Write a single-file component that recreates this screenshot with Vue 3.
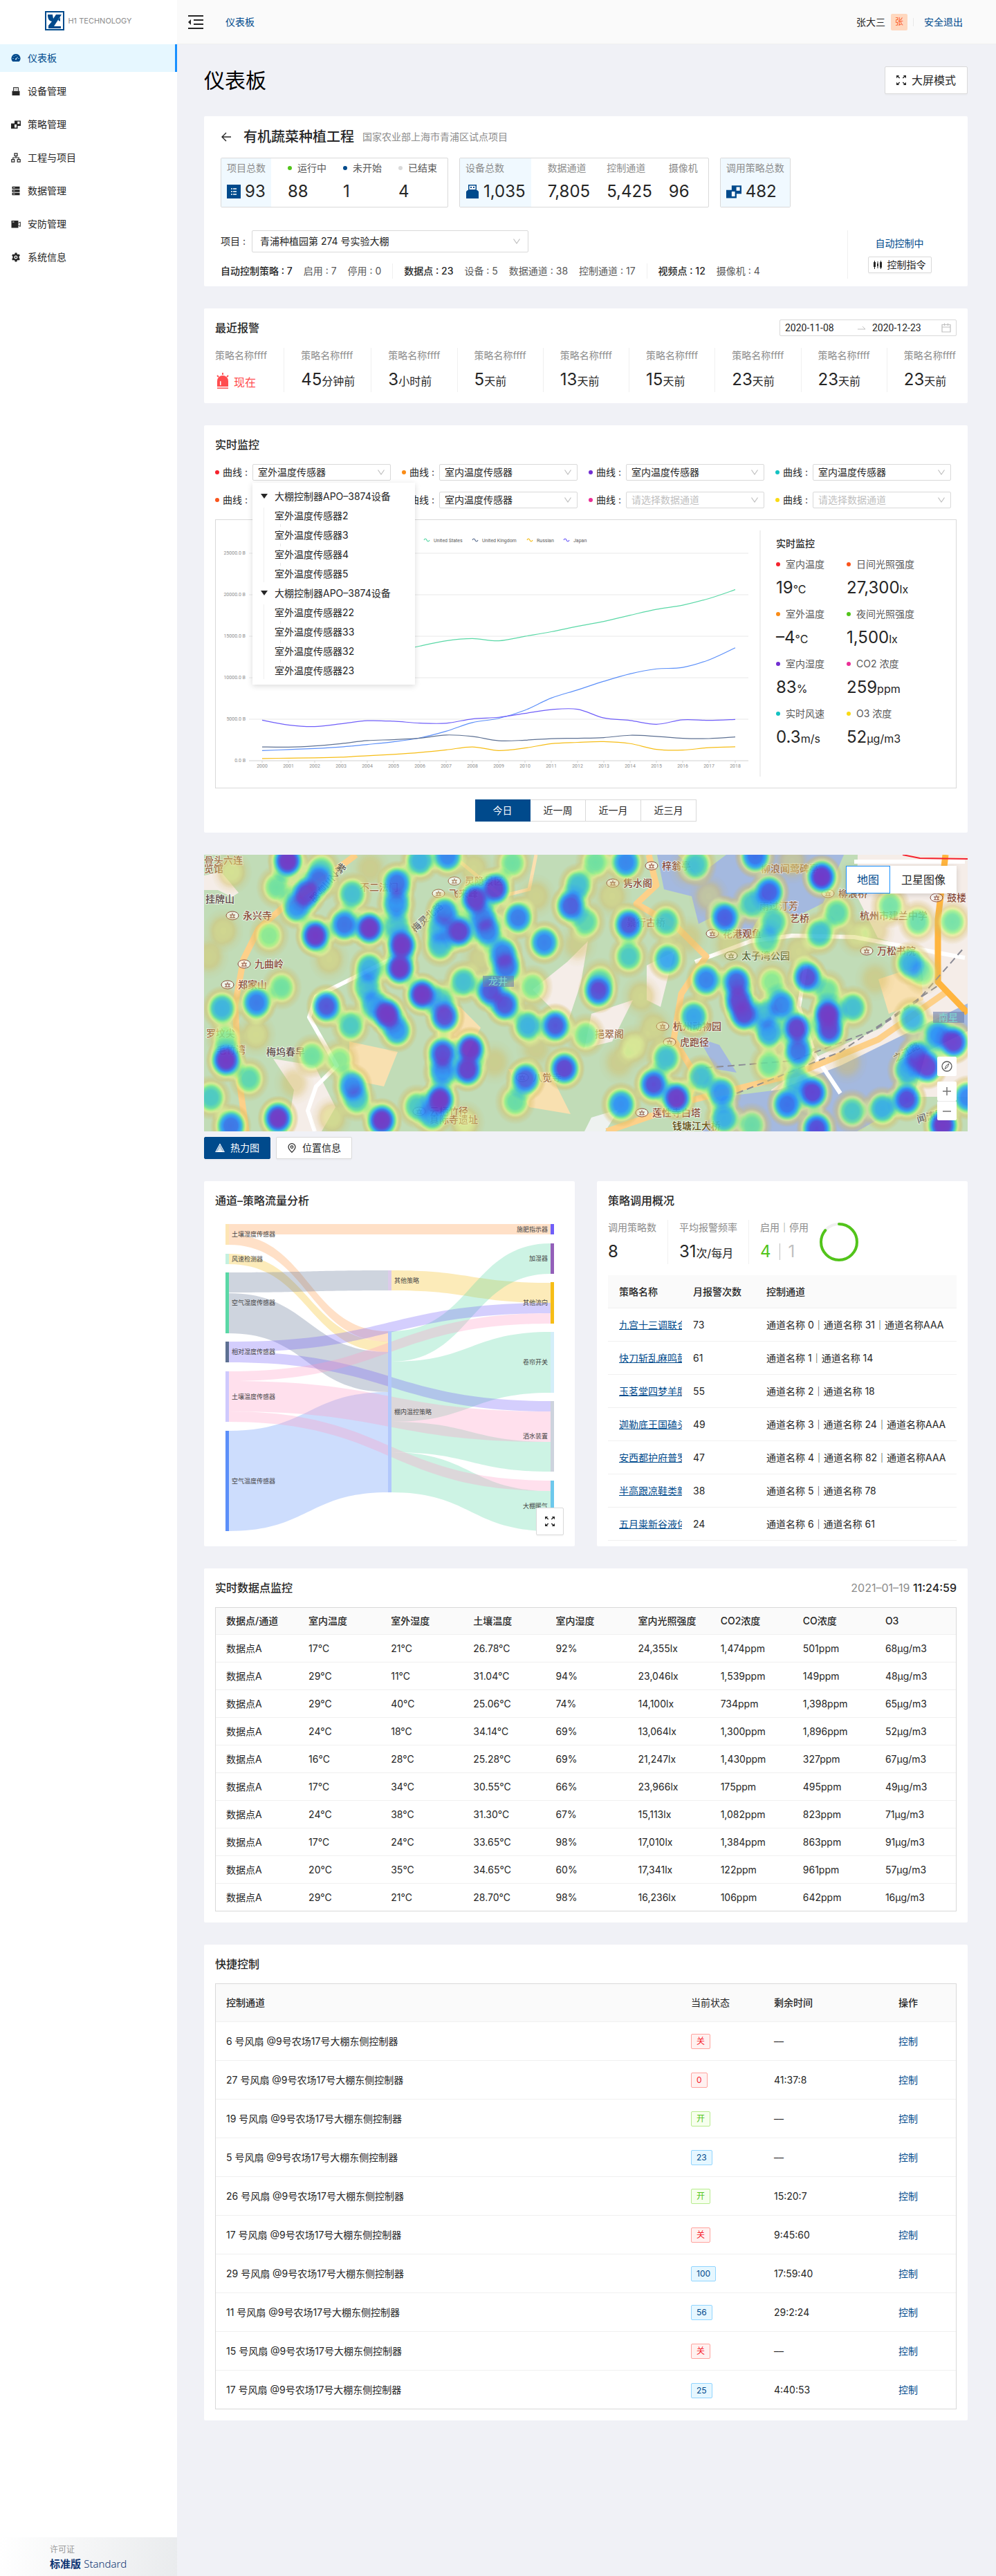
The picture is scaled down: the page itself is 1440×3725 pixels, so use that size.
<script setup>
const navItems = [
  { label: '仪表板', icon: 'gauge', active: true },
  { label: '设备管理', icon: 'usb' },
  { label: '策略管理', icon: 'blocks' },
  { label: '工程与项目', icon: 'tree' },
  { label: '数据管理', icon: 'server' },
  { label: '安防管理', icon: 'camera' },
  { label: '系统信息', icon: 'gear' },
]

const alarms = [
  { num: '', text: '现在' },
  { num: '45', text: '分钟前' },
  { num: '3', text: '小时前' },
  { num: '5', text: '天前' },
  { num: '13', text: '天前' },
  { num: '15', text: '天前' },
  { num: '23', text: '天前' },
  { num: '23', text: '天前' },
  { num: '23', text: '天前' },
]

const curves = [
  { color: '#f5222d', value: '室外温度传感器' },
  { color: '#fa8c16', value: '室内温度传感器' },
  { color: '#722ed1', value: '室内温度传感器' },
  { color: '#13c2c2', value: '室内温度传感器' },
  { color: '#fa541c', value: '室内温度传感器' },
  { color: '#52c41a', value: '室内温度传感器' },
  { color: '#eb2f96', value: '请选择数据通道', empty: true },
  { color: '#fadb14', value: '请选择数据通道', empty: true },
]

const tree = [
  { name: '大棚控制器APO–3874设备', children: ['2', '3', '4', '5'] },
  { name: '大棚控制器APO–3874设备', children: ['22', '33', '32', '23'] },
]

const readings = [
  { color: '#f5222d', label: '室内温度', num: '19', unit: '°C' },
  { color: '#fa541c', label: '日间光照强度', num: '27,300', unit: 'lx' },
  { color: '#fa8c16', label: '室外温度', num: '–4', unit: '°C' },
  { color: '#52c41a', label: '夜间光照强度', num: '1,500', unit: 'lx' },
  { color: '#722ed1', label: '室内湿度', num: '83', unit: '%' },
  { color: '#eb2f96', label: 'CO2 浓度', num: '259', unit: 'ppm' },
  { color: '#13c2c2', label: '实时风速', num: '0.3', unit: 'm/s' },
  { color: '#fadb14', label: 'O3 浓度', num: '52', unit: 'µg/m3' },
]

/* line chart */
const years = Array.from({ length: 19 }, (_, i) => 2000 + i)
const ticks = [25000, 20000, 15000, 10000, 5000, 0]
const px = (i) => 67 + i * 38
const py = (v) => 348 - v * 0.012
const series = [
  { name: 'China', color: '#5B8FF9', data: [1211, 1339, 1471, 1660, 1955, 2286, 2752, 3550, 4594, 5102, 6087, 7552, 8532, 9570, 10475, 11062, 11233, 12150, 13608] },
  { name: 'United States', color: '#5AD8A6', data: [10252, 10582, 10936, 11458, 12214, 13037, 13815, 14452, 14713, 14449, 14992, 15543, 16197, 16785, 17527, 18238, 18745, 19543, 20612] },
  { name: 'United Kingdom', color: '#5D7092', data: [1658, 1640, 1784, 2057, 2421, 2538, 2713, 3100, 2922, 2410, 2475, 2659, 2704, 2786, 3064, 2929, 2694, 2666, 2861] },
  { name: 'Russian', color: '#F6BD16', data: [260, 307, 345, 430, 591, 764, 990, 1300, 1661, 1223, 1525, 2052, 2210, 2297, 2060, 1364, 1283, 1579, 1670] },
  { name: 'Japan', color: '#6F5EF9', data: [4888, 4304, 4115, 4446, 4815, 4755, 4530, 4515, 5038, 5231, 5700, 6157, 6203, 5156, 4850, 4389, 4927, 4860, 4971] },
]
const legend = [
  { name: 'United States', color: '#5AD8A6', x: 301 },
  { name: 'United Kingdom', color: '#5D7092', x: 371 },
  { name: 'Russian', color: '#F6BD16', x: 450 },
  { name: 'Japan', color: '#6F5EF9', x: 503 },
]
function curve(data) {
  const p = data.map((v, i) => [px(i), py(v)])
  let d = `M${p[0][0]},${p[0][1]}`
  for (let i = 0; i < p.length - 1; i++) {
    const a = p[i - 1] || p[i]
    const b = p[i]
    const c = p[i + 1]
    const e = p[i + 2] || c
    d += `C${b[0] + (c[0] - a[0]) / 6},${b[1] + (c[1] - a[1]) / 6} ${c[0] - (e[0] - b[0]) / 6},${c[1] - (e[1] - b[1]) / 6} ${c[0]},${c[1]}`
  }
  return d
}

/* heat map: x, y, weight */
const heat = [
  [121, 9, 1], [148, 56, .9], [134, 76, .7], [166, 37, .7], [105, 47, .4], [170, 21, .4], [161, 117, 1], [239, 106, 1],
  [203, 101, .8], [214, 57, .55], [279, 41, .8], [278, 71, .7], [279, 104, .5], [286, 131, 1], [283, 164, 1], [239, 164, .6],
  [235, 191, .5], [315, 202, 1], [265, 231, 1], [246, 217, .6], [279, 254, .7], [348, 234, .9], [341, 211, .5], [177, 219, .88],
  [212, 247, .5], [94, 117, .35], [76, 214, .78], [26, 222, .6], [112, 192, .4], [32, 297, 1], [32, 267, .35], [65, 324, .45],
  [10, 351, .5], [39, 392, .8], [107, 381, 1], [156, 291, .4], [196, 297, .35], [214, 334, .72], [221, 354, .5], [257, 384, 1],
  [345, 287, .9], [385, 281, 1], [381, 311, .95], [345, 314, .7], [341, 354, 1], [330, 377, .6], [308, 364, .5], [421, 49, .95],
  [392, 64, .95], [403, 91, .7], [410, 111, .75], [348, 84, .75], [369, 111, .95], [341, 131, .55], [341, 107, .5], [432, 142, .75],
  [437, 163, .8], [375, 184, .55], [414, 197, .88], [435, 217, .88], [454, 91, .78], [492, 127, .76], [446, 12, .4], [352, 2, .75],
  [312, 9, .6], [541, 44, .55], [530, 74, .85], [552, 97, .45], [475, 191, .38], [508, 247, .88], [468, 247, .6], [552, 261, .4],
  [570, 197, .88], [573, 181, .35], [521, 309, .93], [465, 324, .85], [450, 357, .42], [610, 11, .75], [566, 11, .4], [614, 101, .88],
  [614, 147, .5], [668, 97, .52], [670, 151, .65], [712, 14, .5], [797, 2, .8], [753, 91, .85], [817, 54, .85], [792, 71, .5],
  [824, 97, .5], [813, 124, .45], [893, 32, 1], [890, 114, .55], [915, 84, .45], [726, 181, .76], [708, 234, .65], [770, 184, .85],
  [773, 211, .9], [781, 231, .9], [821, 184, .35], [835, 217, .75], [810, 231, .5], [817, 257, .65], [857, 251, .95], [859, 284, .8],
  [872, 177, .9], [902, 231, 1], [904, 254, .9], [938, 221, .55], [901, 197, .4], [1021, 157, .6], [1039, 171, .35], [1032, 97, .42],
  [992, 74, .4], [1082, 97, .4], [1024, 237, .6], [1061, 261, .7], [1084, 271, .95], [1031, 291, .8], [1046, 307, .93], [1017, 311, .6],
  [1016, 354, .9], [1068, 391, 1], [1104, 351, .75], [981, 367, .6], [937, 371, .5], [880, 344, .93], [843, 361, .8], [857, 327, .5],
  [886, 396, .9], [817, 304, .4], [748, 344, .7], [719, 321, .55], [650, 332, .9], [683, 352, .98], [668, 294, .55], [603, 361, .72],
  [752, 381, .6], [792, 391, .4],
  [181, 151, .14], [28, 110, .14], [632, 205, .14], [621, 277, .2], [377, 387, .2], [7, 147, .12], [944, 117, .16], [700, 120, .1],
  [480, 60, .12], [590, 60, .14], [760, 130, .12], [860, 140, .14], [970, 180, .1], [540, 130, .1], [130, 330, .1], [420, 300, .1],
  [600, 300, .1], [700, 20, .1], [850, 10, .14], [930, 300, .1], [390, 20, .14], [240, 20, .1], [480, 280, .1], [650, 250, .14],
  [40, 25, .18], [75, 260, .16], [185, 380, .16], [400, 150, .12], [730, 60, .14], [970, 110, .12],
]
const red = '#8a4a3a'
const tan = '#9c6a48'
const places = [
  [0, 13, '骨头六连', 0, tan], [0, 25, '览馆', 0, tan], [2, 69, '挂牌山', 0, '#5f4a4a'], [56, 93, '永兴寺', 1, red],
  [73, 163, '九曲岭', 1, red], [49, 193, '郑家山', 1, red], [3, 263, '罗坟尖', 0, tan], [18, 287, '毛竹湾', 0, tan],
  [90, 290, '梅坞春早', 0, '#5f4a4a'], [225, 52, '不二法门', 0, tan], [377, 43, '灵隐景区', 1, tan], [354, 61, '飞来峰', 1, tan],
  [606, 46, '隽水阁', 1, red], [662, 21, '梓翁亭', 1, red], [611, 103, '景行古桥', 0, tan], [805, 25, '柳浪闻莺碑亭', 0, tan],
  [917, 61, '柳浪桥', 1, tan], [803, 79, '雨过汀芳', 0, tan], [847, 97, '艺桥', 0, red], [948, 93, '杭州市建兰中学', 0, red],
  [750, 119, '花港观鱼', 1, red], [777, 151, '太子湾公园', 1, '#5a6a3a'], [973, 144, '万松书院', 1, red], [678, 253, '杭州动物园', 1, red],
  [565, 264, '挹翠阁', 0, tan], [688, 276, '虎跑径', 1, red], [648, 378, '莲性寺白塔', 1, red], [677, 397, '钱塘江大桥', 0, '#5f4a10'],
  [326, 376, '云栖竹径', 1, red], [326, 388, '真际寺遗址', 0, red], [475, 327, '八觉寺', 1, tan], [1074, 67, '鼓楼', 1, red],
]

/* sankey */
const nodes = [
  { x: 0, a: 0, b: 30, c: '#fde5b4', t: '土壤湿度传感器' },
  { x: 0, a: 43, b: 58, c: '#c4f1e0', t: '风速检测器' },
  { x: 0, a: 70, b: 158, c: '#5AD8A6', t: '空气湿度传感器' },
  { x: 0, a: 170, b: 200, c: '#5D7092', t: '相对湿度传感器' },
  { x: 0, a: 213, b: 286, c: '#cfc9fd', t: '土壤温度传感器' },
  { x: 0, a: 299, b: 444, c: '#5B8FF9', t: '空气温度传感器' },
  { x: 235, a: 67, b: 96, c: '#dccbea', t: '其他策略' },
  { x: 235, a: 155, b: 388, c: '#b2c8fc', t: '棚内温控策略' },
  { x: 470, a: 0, b: 15, c: '#6F5EF9', t: '施肥指示器' },
  { x: 470, a: 28, b: 72, c: '#945FB9', t: '加湿器' },
  { x: 470, a: 84, b: 144, c: '#F6BD16', t: '其他流向' },
  { x: 470, a: 156, b: 244, c: '#D3EEF9', t: '卷帘开关' },
  { x: 470, a: 256, b: 358, c: '#CDD3DD', t: '洒水装置' },
  { x: 470, a: 371, b: 444, c: '#6DC8EC', t: '大棚暖气' },
]
const links = [
  [0, 0, 15, 2, 0, 15, '#FF9845'],
  [0, 15, 30, 1, 155, 170, '#FF9845'],
  [0, 43, 58, 1, 170, 185, '#F6BD16'],
  [0, 70, 99, 1, 67, 96, '#5D7092'],
  [0, 100, 158, 1, 185, 243, '#5D7092'],
  [0, 299, 444, 1, 243, 388, '#5B8FF9'],
  [1, 67, 96, 2, 85, 114, '#F6BD16'],
  [1, 155, 199, 2, 28, 72, '#5AD8A6'],
  [1, 199, 286, 2, 156, 244, '#5AD8A6'],
  [1, 286, 330, 2, 315, 358, '#5AD8A6'],
  [1, 330, 388, 2, 386, 444, '#5AD8A6'],
  [0, 170, 185, 2, 114, 129, '#6F5EF9'],
  [0, 185, 200, 2, 256, 271, '#6F5EF9'],
  [0, 213, 227, 2, 129, 144, '#FF99C3'],
  [0, 227, 271, 2, 271, 315, '#FF99C3'],
  [0, 271, 286, 2, 371, 386, '#FF99C3'],
]
function ribbon([c0, a0, b0, c1, a1, b1]) {
  const x0 = c0 * 235 + 5
  const x1 = c1 * 235
  const m = (x0 + x1) / 2
  return `M${x0},${a0}C${m},${a0} ${m},${a1} ${x1},${a1}V${b1}C${m},${b1} ${m},${b0} ${x0},${b0}Z`
}

const strategies = [
  ['九宫十三调联合体', '73', '通道名称 0｜通道名称 31｜通道名称AAA'],
  ['快刀斩乱麻鸣鼓', '61', '通道名称 1｜通道名称 14'],
  ['玉茗堂四梦羊脂', '55', '通道名称 2｜通道名称 18'],
  ['迦勒底王国磕头', '49', '通道名称 3｜通道名称 24｜通道名称AAA'],
  ['安西都护府普罗', '47', '通道名称 4｜通道名称 82｜通道名称AAA'],
  ['半高跟凉鞋类新', '38', '通道名称 5｜通道名称 78'],
  ['五月粜新谷液体', '24', '通道名称 6｜通道名称 61'],
]

const pointHeads = ['数据点/通道', '室内温度', '室外湿度', '土壤温度', '室内湿度', '室内光照强度', 'CO2浓度', 'CO浓度', 'O3']
const points = [
  ['17', '21', '26.78', '92', '24,355', '1,474', '501', '68'],
  ['29', '11', '31.04', '94', '23,046', '1,539', '149', '48'],
  ['29', '40', '25.06', '74', '14,100', '734', '1,398', '65'],
  ['24', '18', '34.14', '69', '13,064', '1,300', '1,896', '52'],
  ['16', '28', '25.28', '69', '21,247', '1,430', '327', '67'],
  ['17', '34', '30.55', '66', '23,966', '175', '495', '49'],
  ['24', '38', '31.30', '67', '15,113', '1,082', '823', '71'],
  ['17', '24', '33.65', '98', '17,010', '1,384', '863', '91'],
  ['20', '35', '34.65', '60', '17,341', '122', '961', '57'],
  ['29', '21', '28.70', '98', '16,236', '106', '642', '16'],
]
const units = ['°C', '°C', '°C', '%', 'lx', 'ppm', 'ppm', 'µg/m3']

const controls = [
  ['6', '关', 'red', '––'],
  ['27', '0', 'red', '41:37:8'],
  ['19', '开', 'green', '––'],
  ['5', '23', 'blue', '––'],
  ['26', '开', 'green', '15:20:7'],
  ['17', '关', 'red', '9:45:60'],
  ['29', '100', 'blue', '17:59:40'],
  ['11', '56', 'blue', '29:2:24'],
  ['15', '关', 'red', '––'],
  ['17', '25', 'blue', '4:40:53'],
]
</script>

<template>
  <svg class="defs" aria-hidden="true">
    <symbol id="gauge" viewBox="0 0 14 14"><path fill="currentColor" d="M7 1a6.500 6.500 0 0 0-4.700 11h9.400A6.500 6.500 0 0 0 7 1z" /><path stroke="#e6f7ff" stroke-width="1" fill="none" d="M7 8.500l2.500-3M2.500 7.500h1M10.500 7.500h1M4 4.300l.6.6M7 2.800v.9" /><circle cx="7" cy="8.500" r="1" fill="#e6f7ff" /></symbol>
    <symbol id="usb" viewBox="0 0 14 14"><path fill="currentColor" d="M1.500 6.500h11V13h-11z" /><path fill="none" stroke="currentColor" d="M3.500 6.500V1.500h7v5" /><path fill="currentColor" d="M5 3h1.300v1.300H5zM7.700 3H9v1.300H7.700z" /></symbol>
    <symbol id="blocks" viewBox="0 0 14 14"><path fill="currentColor" d="M0 5.500h5V1.500h9v7.500H9.500v4H0z" /><path fill="#fff" d="M9.300 2.800h3.200v3.400H9.300zM5 7h3v4.400H5z" /></symbol>
    <symbol id="tree" viewBox="0 0 14 14"><path fill="none" stroke="currentColor" stroke-width="1.200" d="M5 .8h4v3.500H5zM.8 9.600h4v3.500h-4zM9.200 9.600h4v3.500h-4zM7 4.300V7M2.800 9.600V7h8.400v2.600" /></symbol>
    <symbol id="server" viewBox="0 0 14 14"><path fill="currentColor" d="M1.500.8h11v3.400h-11zM1.500 5.300h11v3.400h-11zM1.500 9.800h11v3.400h-11z" /><path stroke="#fff" stroke-width=".8" d="M3 2.500h2.500M3 7h2.500M3 11.500h2.500" /></symbol>
    <symbol id="camera" viewBox="0 0 14 14"><path fill="currentColor" d="M.5 2h10v10.500H.5z" /><path fill="none" stroke="currentColor" d="M10.500 5.500L13.300 4v6.500l-2.800-1.500" /><path stroke="#fff" d="M2 4h2.500" /></symbol>
    <symbol id="gear" viewBox="0 0 14 14"><path fill="currentColor" fill-rule="evenodd" d="M5.700.5h2.600l.4 1.700 1.200.7 1.700-.5 1.300 2.200-1.300 1.200v2.400l1.300 1.200-1.300 2.200-1.700-.5-1.200.7-.4 1.700H5.700l-.4-1.700-1.200-.7-1.700.5L1.100 9.400l1.300-1.200V5.800L1.100 4.600l1.300-2.200 1.700.5 1.200-.7zM7 4.500a2.500 2.500 0 1 0 0 5 2.500 2.500 0 0 0 0-5z" /><circle cx="7" cy="7" r="1.200" fill="currentColor" /></symbol>
    <symbol id="expand" viewBox="0 0 14 14"><path fill="currentColor" d="M0 0h4.200L2.900 1.300l2.300 2.300-1 1-2.300-2.300L0 4.200zM14 0v4.200l-1.900-1.900-2.300 2.300-1-1 2.300-2.300L9.800 0zM0 14V9.800l1.900 1.900 2.300-2.300 1 1-2.300 2.300L4.200 14zM14 14H9.800l1.300-1.300-2.300-2.300 1-1 2.300 2.300L14 9.800z" /></symbol>
    <symbol id="chevron" viewBox="0 0 12 12"><path fill="none" stroke="#bfbfbf" stroke-width="1.200" d="M1.500 2.500L6 9l4.500-6.500" /></symbol>
  </svg>

  <div class="layout">
    <aside class="sider">
      <div class="logo">
        <svg width="28" height="28" viewBox="0 0 28 28"><path fill="#004a8c" d="M0 0h28v28H0z" /><path fill="#fff" d="M2 2h24v24H2z" /><path fill="#004a8c" d="M4 5h7l1 6 4-6h8L13 22h10v3H5v-4l5-6c-5-1-6-5-6-10zM19 13l3-4v6z" /></svg>
        <span>H1 TECHNOLOGY</span>
      </div>
      <nav>
        <a v-for="n in navItems" :key="n.label" href="#" class="nav-item" :class="{ active: n.active }">
          <svg width="14" height="14"><use :href="'#' + n.icon" /></svg>{{ n.label }}
        </a>
      </nav>
      <div class="license">
        <small>许可证</small>
        <div><b>标准版</b> <span>Standard</span></div>
      </div>
    </aside>

    <div class="main">
      <header class="topbar">
        <button class="fold" aria-label="折叠菜单">
          <svg width="22" height="20" viewBox="0 0 22 20"><path stroke="#262626" stroke-width="2" d="M0 1h22M8 7h14M8 13h14M0 19h22" /><path fill="#262626" d="M0 10l4-4v8z" /></svg>
        </button>
        <a href="#">仪表板</a>
        <div class="user">
          <span>张大三</span><span class="avatar">张</span><i></i><a href="#">安全退出</a>
        </div>
      </header>

      <main class="content">
        <div class="page-head">
          <h1>仪表板</h1>
          <button class="btn big"><svg width="14" height="14"><use href="#expand" /></svg>大屏模式</button>
        </div>

        <section class="card project">
          <div class="project-title">
            <a href="#" aria-label="返回"><svg width="16" height="16" viewBox="0 0 16 16"><path fill="none" stroke="#262626" stroke-width="1.400" d="M15 8H2M8 2L2 8l6 6" /></svg></a>
            <h2>有机蔬菜种植工程</h2>
            <span>国家农业部上海市青浦区试点项目</span>
          </div>
          <div class="stats">
            <div class="stat-box">
              <div class="stat lead">
                <span>项目总数</span>
                <strong><svg width="20" height="20" viewBox="0 0 20 20"><path fill="#004a8c" d="M0 0h20v20H0z" /><path stroke="#fff" stroke-width="1.500" d="M6 6h2M9 6h5M6 10h2M9 10h5M6 14h2M9 14h5" /></svg>93</strong>
              </div>
              <div class="stat"><span class="dotted"><i class="dot" style="background: #52c41a"></i>运行中</span><strong>88</strong></div>
              <div class="stat"><span class="dotted"><i class="dot" style="background: #004a8c"></i>未开始</span><strong>1</strong></div>
              <div class="stat"><span class="dotted"><i class="dot" style="background: #d9d9d9"></i>已结束</span><strong>4</strong></div>
            </div>
            <div class="stat-box">
              <div class="stat lead">
                <span>设备总数</span>
                <strong><svg width="20" height="20" viewBox="0 0 20 20"><path fill="#004a8c" d="M1 10l2-2h14l2 2v10H1zM4 0h12v8H4z" /><path fill="#fff" d="M5.500 1.500h9V7h-9z" /><path fill="#004a8c" d="M7 3h2v2H7zM11 3h2v2h-2z" /></svg>1,035</strong>
              </div>
              <div class="stat"><span>数据通道</span><strong>7,805</strong></div>
              <div class="stat"><span>控制通道</span><strong>5,425</strong></div>
              <div class="stat"><span>摄像机</span><strong>96</strong></div>
            </div>
            <div class="stat-box">
              <div class="stat lead">
                <span>调用策略总数</span>
                <strong class="blue"><svg width="22" height="22"><use href="#blocks" /></svg><em>482</em></strong>
              </div>
            </div>
          </div>
          <div class="project-foot">
            <div class="foot-main">
              <div class="field">
                <label for="project">项目 :</label>
                <span class="select wide"><select id="project"><option>青浦种植园第 274 号实验大棚</option></select><svg width="12" height="12"><use href="#chevron" /></svg></span>
              </div>
              <div class="summary">
                <p><b>自动控制策略 : 7</b><span>启用 : 7</span><span>停用 : 0</span></p>
                <p><b>数据点 : 23</b><span>设备 : 5</span><span>数据通道 : 38</span><span>控制通道 : 17</span></p>
                <p><b>视频点 : 12</b><span>摄像机 : 4</span></p>
              </div>
            </div>
            <div class="foot-side">
              <a href="#">自动控制中</a>
              <button class="btn small"><svg width="12" height="12" viewBox="0 0 12 12"><path stroke="#262626" d="M1.500 0v12M6 1v10M10.500 0v12" /><path fill="#262626" d="M0 2h3v7H0zM5 4h2v4H5zM9 2h3v8H9z" /></svg>控制指令</button>
            </div>
          </div>
        </section>

        <section class="card alarms">
          <div class="card-head">
            <h3>最近报警</h3>
            <div class="range">
              <input class="from" value="2020-11-08" aria-label="开始日期" />
              <svg width="12" height="6" viewBox="0 0 12 6"><path fill="none" stroke="#bfbfbf" d="M0 5h11L7 1" /></svg>
              <input value="2020-12-23" aria-label="结束日期" />
              <svg width="14" height="14" viewBox="0 0 14 14"><path fill="none" stroke="#bfbfbf" stroke-width="1.200" d="M1 2.500h12v10.500H1zM1 6h12M4.500.5v3.500M9.500.5v3.500" /></svg>
            </div>
          </div>
          <ul class="alarm-list">
            <li v-for="(a, i) in alarms" :key="i" :class="{ now: !a.num }">
              <span>策略名称ffff</span>
              <strong>
                <svg v-if="!a.num" width="22" height="24" viewBox="0 0 22 24"><path fill="#ff4d4f" fill-rule="evenodd" d="M3 20v-8a8 8 0 0 1 16 0v8zm4-8v6h1.500v-5.500zM3 21.500h16V23H3z" /><path stroke="#ff4d4f" stroke-width="1.800" d="M11 0v3M3 4l2 2M19 4l-2 2" /></svg>
                {{ a.num }}<small>{{ a.text }}</small>
              </strong>
            </li>
          </ul>
        </section>

        <section class="card monitor">
          <h3>实时监控</h3>
          <div class="curves">
            <div v-for="(c, i) in curves" :key="i" class="field">
              <i class="dot" :style="{ background: c.color }"></i>
              <label :for="'curve' + i">曲线 :</label>
              <span class="select"><select :id="'curve' + i" :class="{ empty: c.empty }"><option>{{ c.value }}</option></select><svg width="12" height="12"><use href="#chevron" /></svg></span>
              <div v-if="i === 0" class="dropdown">
                <div v-for="(g, k) in tree" :key="k">
                  <p><svg width="10" height="8" viewBox="0 0 10 8"><path fill="#262626" d="M0 0h10L5 7z" /></svg>{{ g.name }}</p>
                  <ul><li v-for="s in g.children" :key="s">室外温度传感器{{ s }}</li></ul>
                </div>
              </div>
            </div>
          </div>
          <div class="chart-box">
            <svg class="chart" viewBox="0 0 786 387">
              <g v-for="t in ticks" :key="t">
                <path :stroke="t ? '#e8e8e8' : '#d0d0d0'" :d="`M48,${py(t)}H770`" />
                <text x="43" :y="py(t) + 2" text-anchor="end">{{ t }}.0 B</text>
              </g>
              <g v-for="(y, i) in years" :key="y">
                <path stroke="#d0d0d0" :d="`M${px(i)},348v3`" />
                <text :x="px(i)" y="358" text-anchor="middle">{{ y }}</text>
              </g>
              <path v-for="s in series" :key="s.name" :d="curve(s.data)" fill="none" :stroke="s.color" stroke-width="1.200" />
              <g v-for="l in legend" :key="l.name">
                <path fill="none" :stroke="l.color" stroke-width="1.200" :d="`M${l.x},29q2,-4 4,0t4,0`" />
                <text class="legend" :x="l.x + 14" y="32">{{ l.name }}</text>
              </g>
            </svg>
            <div class="readings">
              <h4>实时监控</h4>
              <dl>
                <div v-for="r in readings" :key="r.label">
                  <dt><i class="dot" :style="{ background: r.color }"></i>{{ r.label }}</dt>
                  <dd>{{ r.num }}<small>{{ r.unit }}</small></dd>
                </div>
              </dl>
            </div>
          </div>
          <div class="periods">
            <button class="on">今日</button><button>近一周</button><button>近一月</button><button>近三月</button>
          </div>
        </section>

        <section class="map-block">
          <div class="map">
            <svg viewBox="0 0 1104 400" preserveAspectRatio="xMidYMid slice">
              <defs>
                <radialGradient id="spot"><stop offset="0" stop-opacity="1" /><stop offset=".32" stop-opacity=".97" /><stop offset=".48" stop-opacity=".78" /><stop offset=".6" stop-opacity=".48" /><stop offset=".74" stop-opacity=".2" /><stop offset="1" stop-opacity="0" /></radialGradient>
                <filter id="ramp" x="0" y="0" width="1104" height="400" filterUnits="userSpaceOnUse" color-interpolation-filters="sRGB">
                  <feColorMatrix values="0 0 0 1 0  0 0 0 1 0  0 0 0 1 0  0 0 0 1 0" />
                  <feComponentTransfer>
                    <feFuncR type="table" tableValues=".82 .84 .9 .62 .38 .24 .18 .14 .2 .33 .42" />
                    <feFuncG type="table" tableValues=".7 .74 .93 .96 .88 .78 .68 .56 .42 .25 .17" />
                    <feFuncB type="table" tableValues=".35 .38 .52 .5 .62 .78 .9 .98 .92 .84 .78" />
                    <feFuncA type="table" tableValues="0 .5 .7 .86 .92 .95 .96 .97 .98 .98 .98" />
                  </feComponentTransfer>
                </filter>
              </defs>
              <path fill="#c1dcb7" d="M0 0h1104v400H0z" />
              <path fill="#f5ede8" d="M945 0h159v240l-60-30-10-70-60-20-30-60zM820 340l70-50 90-40 60-70 64 60v110H820zM100 295l60 10 30 60-20 35h-50l10-60zM475 195l50-40 30-30-10 60-20 60zM0 30l25-5 25 30-10 6-20-10H0zM560 230l60-20-30 60-40 10zM640 160l40-20-20 80-20-10z" />
              <path fill="#f8e0b0" d="M330 210l40 10 30 30-20 40-40-20zM210 270l70 15-20 50-50-10zM440 310l60 5 30 60-60-10zM975 180l60-20 5 50-50 20z" />
              <path fill="#a4b9df" d="M655 0h30l30 30 40-30h170l-30 70-40 20-40-20-30 50-50-30-20 10-10-40-40-10zM720 400l30-50 80-10 90-35 184-90v40l-60 30-20 70-80 45zM715 265l30 10 25 40-30-5z" />
              <path fill="#eef2f0" d="M560 380l40-12-20 32h-30z" />
              <path fill="none" stroke="#fff" stroke-width="6" stroke-linejoin="round" d="M710 155l80-30 60-8 90 2 160 30M160 400l-10-30 12-35 30-30-40-70 10-30 110-55M880 285l40 60M870 160l-10 60 20 60M940 10h160" />
              <path fill="none" stroke="#fbe0b0" stroke-width="5" d="M480 0l-10 50-40 10M370 10l60 50" />
              <path fill="none" stroke="#fdd089" stroke-width="9" stroke-linejoin="round" d="M220 0l-57 42-50 35-34 30-22 44-12 66 5 103 11 80M643 0l11 44-29 27 58 33 43 43-36 54-11 66 33 54-15 39-115 40M705 355l150-38 120-50 100-70" />
              <path fill="none" stroke="#ffb53f" stroke-width="9" stroke-linejoin="round" d="M1072 0l-11 94v90l43 45" />
              <path fill="none" stroke="#8b8b95" stroke-width="2" stroke-dasharray="10 6" d="M725 308l125-10 120-45 60-40 70-80M770 345l150-60 140-95" />
              <path fill="none" stroke="#f5222d" stroke-width="2" d="M1010 0l25 5 69 1" />
              <g class="places">
                <template v-for="(p, i) in places" :key="i">
                  <g v-if="p[3]" :transform="`translate(${p[0] - 15} ${p[1] - 5})`"><ellipse rx="9" ry="6" fill="#fff" fill-opacity=".7" :stroke="p[4]" /><path :stroke="p[4]" fill="none" d="M-4-1h8M-4 3h8M-2-1v4M2-1v4M0-4v3" /></g>
                  <text :x="p[0]" :y="p[1]" :fill="p[4]">{{ p[2] }}</text>
                </template>
                <text class="vertical" transform="translate(202 14) rotate(42)" fill="#555">紫之三号路</text>
                <text transform="translate(305 113) rotate(-42)" fill="#666">梅灵北路</text>
                <text transform="translate(1000 300) rotate(-30)" fill="#666">之江路</text>
                <text transform="translate(1032 388) rotate(-15)" fill="#666">闻涛路</text>
              </g>
              <g filter="url(#ramp)" opacity=".92">
                <ellipse v-for="(h, i) in heat" :key="i" :cx="h[0]" :cy="h[1]" rx="30" ry="33" fill="url(#spot)" :fill-opacity="h[2]" />
              </g>
              <g class="tags">
                <path fill="#6a7fae" fill-opacity=".6" d="M403 175h45v16h-45zM1054 227h45v16h-45z" />
                <text x="411" y="188">龙井</text><text x="1062" y="240">南星</text>
              </g>
            </svg>
            <div class="map-type"><button class="on">地图</button><button>卫星图像</button></div>
            <div class="map-tools">
              <button aria-label="指南针"><svg width="18" height="18" viewBox="0 0 18 18"><circle cx="9" cy="9" r="7" fill="none" stroke="#595959" stroke-width="1.300" /><path fill="none" stroke="#595959" d="M12 5l-2 5-4 3 2-5z" /></svg></button>
              <div>
                <button aria-label="放大"><svg width="14" height="14" viewBox="0 0 14 14"><path stroke="#737373" stroke-width="1.500" d="M1 7h12M7 1v12" /></svg></button>
                <button aria-label="缩小"><svg width="14" height="14" viewBox="0 0 14 14"><path stroke="#737373" stroke-width="1.500" d="M1 7h12" /></svg></button>
              </div>
            </div>
          </div>
          <div class="map-modes">
            <button class="btn primary"><svg width="14" height="14" viewBox="0 0 14 14"><path fill="none" stroke="#fff" stroke-width="1.100" d="M7 1.500l6 11H1zM7 5l3.500 6.500h-7zM7 8l1.500 3h-3z" /></svg>热力图</button>
            <button class="btn"><svg width="14" height="14" viewBox="0 0 14 14"><path fill="none" stroke="#262626" stroke-width="1.200" d="M7 13.400C4 10.500 2 8.300 2 5.600a5 5 0 0 1 10 0c0 2.700-2 4.900-5 7.800z" /><circle cx="7" cy="5.600" r="1.800" fill="none" stroke="#262626" stroke-width="1.200" /></svg>位置信息</button>
          </div>
        </section>

        <div class="pair">
          <section class="card flow">
            <h3>通道–策略流量分析</h3>
            <svg viewBox="0 0 475 446">
              <path v-for="(l, i) in links" :key="i" :d="ribbon(l)" :fill="l[6]" fill-opacity=".3" />
              <g v-for="n in nodes" :key="n.t">
                <rect :x="n.x" :y="n.a" width="5" :height="n.b - n.a" :fill="n.c" />
                <text :x="n.x === 470 ? 466 : n.x + 9" :y="(n.a + n.b) / 2 + 3" :text-anchor="n.x === 470 ? 'end' : 'start'">{{ n.t }}</text>
              </g>
            </svg>
            <button class="btn full" aria-label="全屏"><svg width="14" height="14"><use href="#expand" /></svg></button>
          </section>

          <section class="card strategy">
            <h3>策略调用概况</h3>
            <div class="strategy-stats">
              <div><span>调用策略数</span><strong>8</strong></div>
              <div><span>平均报警频率</span><strong>31<small>次/每月</small></strong></div>
              <div><span>启用｜停用</span><strong class="ratio"><b>4</b><i></i>1</strong></div>
              <svg width="56" height="56" viewBox="0 0 56 56"><circle cx="28" cy="28" r="26" fill="none" stroke="#f0f0f0" stroke-width="4" /><circle cx="28" cy="28" r="26" fill="none" stroke="#52c41a" stroke-width="4" stroke-linecap="round" stroke-dasharray="140 164" transform="rotate(-90 28 28)" /></svg>
            </div>
            <table>
              <thead><tr><th class="name">策略名称</th><th class="count">月报警次数</th><th>控制通道</th></tr></thead>
              <tbody>
                <tr v-for="s in strategies" :key="s[0]"><td><a href="#">{{ s[0] }}</a></td><td>{{ s[1] }}</td><td>{{ s[2] }}</td></tr>
              </tbody>
            </table>
          </section>
        </div>

        <section class="card points">
          <div class="card-head">
            <h3>实时数据点监控</h3>
            <time>2021–01–19 <b>11:24:59</b></time>
          </div>
          <table class="framed">
            <thead><tr><th v-for="h in pointHeads" :key="h">{{ h }}</th></tr></thead>
            <tbody>
              <tr v-for="(p, i) in points" :key="i"><td>数据点A</td><td v-for="(v, k) in p" :key="k">{{ v }}{{ units[k] }}</td></tr>
            </tbody>
          </table>
        </section>

        <section class="card controls">
          <h3>快捷控制</h3>
          <table class="framed">
            <thead><tr><th>控制通道</th><th class="state">当前状态</th><th class="left">剩余时间</th><th class="act">操作</th></tr></thead>
            <tbody>
              <tr v-for="(c, i) in controls" :key="i">
                <td>{{ c[0] }} 号风扇 @9号农场17号大棚东侧控制器</td>
                <td><span class="tag" :class="c[2]">{{ c[1] }}</span></td>
                <td>{{ c[3] }}</td>
                <td><a href="#">控制</a></td>
              </tr>
            </tbody>
          </table>
        </section>
      </main>
    </div>
  </div>
</template>

<style>
body {
  background: #f0f1f6;
}
</style>

<style scoped>
.defs {
  position: absolute;
  width: 0;
  height: 0;
}
.layout,
.layout button,
.layout select {
  font-family: Inter, 'Noto Sans CJK SC', sans-serif;
  font-size: 14px;
  line-height: 22px;
  color: #262626;
}
.layout {
  display: flex;
  min-height: 100vh;
}
.layout *,
.layout *::before,
.layout *::after {
  box-sizing: border-box;
}
a {
  color: #004a8c;
  text-decoration: none;
}
h1, h2, h3, h4, p, ul, dl, dd {
  margin: 0;
  padding: 0;
  list-style: none;
}
svg {
  flex: none;
}
h3 {
  font-size: 16px;
  line-height: 24px;
  font-weight: 500;
}
button {
  cursor: pointer;
}

/* sidebar */
.sider {
  flex: none;
  width: 256px;
  display: flex;
  flex-direction: column;
  background: #fff;
}
.logo {
  height: 64px;
  padding: 0 0 5px;
  display: flex;
  align-items: center;
  justify-content: center;
  gap: 5px;
  font-size: 11px;
  color: #8c8c8c;
}
.nav-item {
  display: flex;
  align-items: center;
  gap: 10px;
  height: 40px;
  margin-bottom: 8px;
  padding-left: 16px;
  color: #262626;
}
.nav-item.active {
  color: #004a8c;
  background: #e6f7ff;
  border-right: 3px solid #1890ff;
}
.license {
  margin-top: auto;
  height: 56px;
  padding: 8px 0 0 72px;
  background: linear-gradient(100deg, #fff, #e9ebed);
  color: #0b3272;
  font-size: 15px;
  line-height: 20px;
}
.license small {
  display: block;
  font-size: 12px;
  color: #999;
}
.license span {
  font-family: 'Noto Sans', sans-serif;
  font-weight: 300;
}

/* top bar */
.main {
  flex: 1;
  min-width: 0;
}
.topbar {
  height: 64px;
  padding: 0 48px 0 16px;
  display: flex;
  align-items: center;
  gap: 32px;
  background: #fafafa;
  border-bottom: 1px solid #f0f0f0;
}
.fold {
  display: flex;
  padding: 0;
  border: 0;
  background: none;
}
.user {
  margin-left: auto;
  display: flex;
  align-items: center;
  gap: 8px;
}
.user i {
  width: 1px;
  height: 12px;
  margin-right: 7px;
  background: #e8e8e8;
}
.avatar {
  width: 24px;
  height: 24px;
  border-radius: 2px;
  background: #ffd8bf;
  color: #fa541c;
  font-size: 12px;
  line-height: 24px;
  text-align: center;
}

/* generic */
.content {
  padding: 32px 41px 225px 39px;
}
.page-head {
  display: flex;
  justify-content: space-between;
  align-items: center;
  margin-bottom: 32px;
}
h1 {
  font-size: 30px;
  line-height: 40px;
  font-weight: 400;
  color: #000;
}
.btn {
  display: inline-flex;
  align-items: center;
  gap: 8px;
  height: 32px;
  padding: 0 15px;
  background: #fff;
  border: 1px solid #d9d9d9;
  border-radius: 2px;
  box-shadow: 0 2px 0 rgba(0, 0, 0, 0.02);
}
.layout .btn.big {
  height: 40px;
  padding: 0 16px;
  font-size: 16px;
}
.btn.small {
  height: 24px;
  padding: 0 7px;
}
.layout .btn.primary {
  color: #fff;
  background: #004a8c;
  border-color: #004a8c;
}
.card {
  background: #fff;
  border-radius: 2px;
  margin-bottom: 32px;
  padding: 16px;
}
.card-head {
  display: flex;
  justify-content: space-between;
  align-items: flex-start;
}
.dot {
  flex: none;
  width: 6px;
  height: 6px;
  border-radius: 50%;
}
.field {
  display: flex;
  align-items: center;
}
.select {
  position: relative;
  display: block;
}
.select select {
  display: block;
  width: 200px;
  height: 24px;
  padding: 0 7px;
  background: #fff;
  border: 1px solid #d9d9d9;
  border-radius: 2px;
  appearance: none;
}
.select.wide select {
  width: 400px;
  height: 32px;
  padding: 0 11px;
}
.select select.empty {
  color: #bfbfbf;
}
.select svg {
  position: absolute;
  right: 8px;
  top: 50%;
  margin-top: -6px;
  pointer-events: none;
}
.select.wide svg {
  right: 11px;
}

/* project */
.project {
  padding: 16px 24px 11px;
}
.project-title {
  display: flex;
  align-items: center;
  gap: 12px;
  height: 28px;
}
.project-title a {
  display: flex;
  margin-right: 5px;
}
.project-title span {
  color: #8c8c8c;
}
h2 {
  font-size: 20px;
  line-height: 28px;
  font-weight: 500;
}
.stats {
  display: flex;
  gap: 16px;
  margin-top: 16px;
}
.stat-box {
  display: flex;
  gap: 24px;
  height: 72px;
  padding-right: 15px;
  border: 1px solid #d9d9d9;
  border-radius: 2px;
}
.stat-box:last-child {
  padding: 0;
}
.stat {
  padding-top: 3px;
}
.stat span {
  display: block;
  color: #8c8c8c;
}
.stat .dotted {
  display: flex;
  align-items: center;
  gap: 8px;
  color: #595959;
}
.stat strong {
  display: flex;
  align-items: center;
  gap: 6px;
  margin-top: 7px;
  font-size: 24px;
  line-height: 32px;
  font-weight: 400;
}
.stat strong.blue {
  color: #004a8c;
}
.stat em {
  font-style: normal;
  color: #262626;
}
.lead {
  padding: 3px 8px;
  background: #f0f9ff;
}
.project-foot {
  display: flex;
  margin-top: 33px;
}
.foot-main {
  flex: 1;
}
.foot-main label {
  width: 45px;
}
.summary {
  display: flex;
  margin-top: 16px;
  color: #595959;
}
.summary p {
  display: flex;
  gap: 16px;
  padding-right: 16px;
  margin-right: 16px;
  border-right: 1px solid #f0f0f0;
}
.summary p:last-child {
  border: 0;
}
.summary b {
  font-weight: 500;
  color: #262626;
}
.foot-side {
  width: 150px;
  padding-top: 8px;
  display: flex;
  flex-direction: column;
  align-items: center;
  gap: 8px;
  border-left: 1px solid #f0f0f0;
}

/* alarms */
.range {
  display: flex;
  align-items: center;
  width: 256px;
  height: 24px;
  padding: 0 7px;
  gap: 9px;
  border: 1px solid #d9d9d9;
  border-radius: 2px;
}
.range input {
  flex: 1;
  min-width: 0;
  padding: 0;
  border: 0;
  background: none;
  color: #262626;
  font: 14px/22px Roboto, sans-serif;
}
.range .from {
  flex: 0 0 96px;
}
.alarm-list {
  display: grid;
  grid-template-columns: repeat(9, 1fr);
  column-gap: 48px;
  margin-top: 17px;
}
.alarm-list li {
  position: relative;
  height: 64px;
  white-space: nowrap;
  color: #8c8c8c;
}
.alarm-list li:not(:last-child)::after {
  content: '';
  position: absolute;
  right: -24px;
  top: 0;
  height: 64px;
  border-right: 1px solid #f0f0f0;
}
.alarm-list strong {
  display: flex;
  align-items: baseline;
  margin-top: 8px;
  font-size: 24px;
  line-height: 32px;
  font-weight: 400;
  color: #262626;
}
.alarm-list small {
  font-size: 16px;
}
.alarm-list .now strong {
  align-items: center;
  gap: 5px;
}
.alarm-list .now small {
  padding-top: 4px;
  color: #ff4d4f;
}

/* monitor */
.curves {
  display: flex;
  flex-wrap: wrap;
  gap: 16px;
  margin-top: 16px;
}
.curves .field {
  position: relative;
}
.curves label {
  width: 43px;
  margin-left: 5px;
}
.dropdown {
  position: absolute;
  z-index: 2;
  left: 54px;
  top: 27px;
  width: 235px;
  padding: 6px 0;
  background: #fff;
  box-shadow: 0 2px 8px rgba(0, 0, 0, 0.15);
}
.dropdown p {
  display: flex;
  align-items: center;
  gap: 10px;
  padding-left: 12px;
  line-height: 28px;
}
.dropdown ul {
  margin-left: 16px;
  background: linear-gradient(#f0f0f0, #f0f0f0) 0 2px / 1px 108px no-repeat;
}
.dropdown li {
  position: relative;
  padding-left: 16px;
  line-height: 28px;
}
.dropdown li + li::before {
  content: '';
  position: absolute;
  left: 24px;
  top: -2px;
  height: 4px;
  border-left: 1px solid #e8e8e8;
}
.chart-box {
  display: flex;
  align-items: flex-start;
  margin-top: 16px;
  border: 1px solid #d9d9d9;
}
.chart {
  flex: 1;
  min-width: 0;
}
.chart text {
  font-family: Roboto, sans-serif;
  font-size: 7px;
  fill: #8c8c8c;
}
.chart .legend {
  fill: #595959;
}
.readings {
  width: 284px;
  height: 356px;
  margin-top: 15px;
  padding: 8px 0 0 22px;
  border-left: 2px solid #f0f0f0;
}
.readings h4 {
  font-size: 14px;
  font-weight: 500;
}
.readings dl {
  display: grid;
  grid-template-columns: 102px 1fr;
}
.readings dl div {
  height: 72px;
  padding-top: 8px;
}
.readings dt {
  display: flex;
  align-items: center;
  gap: 8px;
  color: #595959;
  white-space: nowrap;
}
.readings dd {
  margin-top: 7px;
  font-size: 24px;
  line-height: 32px;
}
.readings small {
  font-size: 16px;
}
.periods {
  display: flex;
  justify-content: center;
  margin-top: 16px;
}
.periods button {
  width: 80px;
  height: 32px;
  padding: 0;
  background: #fff;
  border: 1px solid #d9d9d9;
  border-left-width: 0;
}
.layout .periods .on {
  color: #fff;
  background: #004a8c;
  border-color: #004a8c;
}

/* map */
.map-block {
  margin-bottom: 32px;
}
.map {
  position: relative;
  height: 400px;
  overflow: hidden;
}
.map > svg {
  display: block;
  width: 100%;
  height: 400px;
}
.places text {
  font-size: 14px;
  font-weight: 500;
  stroke: rgba(255, 255, 255, 0.6);
  stroke-width: 2px;
  paint-order: stroke;
}
.places .vertical {
  writing-mode: vertical-rl;
}
.tags text {
  font-size: 14px;
  fill: #7fd8d0;
}
.map-type {
  position: absolute;
  top: 16px;
  right: 16px;
  display: flex;
  box-shadow: 0 2px 8px rgba(0, 0, 0, 0.15);
}
.layout .map-type button {
  height: 40px;
  padding: 0 16px;
  font-size: 16px;
  background: #fff;
  border: 0;
}
.layout .map-type .on {
  padding: 0 15px;
  color: #004a8c;
  border: 1px solid #1890ff;
}
.map-tools {
  position: absolute;
  right: 16px;
  bottom: 16px;
  display: grid;
  gap: 8px;
}
.map-tools button {
  display: flex;
  align-items: center;
  justify-content: center;
  width: 28px;
  height: 28px;
  padding: 0;
  background: #fff;
  border: 0;
  border-radius: 2px;
}
.map-tools div button:last-child {
  border-top: 1px solid #e8e8e8;
}
.map-modes {
  display: flex;
  gap: 8px;
  margin-top: 8px;
}

/* flow and strategy */
.pair {
  display: grid;
  grid-template-columns: 1fr 1fr;
  gap: 32px;
  margin-bottom: 32px;
}
.pair .card {
  margin: 0;
  min-width: 0;
}
.flow {
  position: relative;
}
.flow > svg {
  display: block;
  margin: 22px 14px 0 15px;
}
.flow text {
  font-size: 9px;
  fill: #434343;
}
.flow .full {
  position: absolute;
  right: 16px;
  bottom: 16px;
  width: 40px;
  height: 40px;
  padding: 0 12px;
}
.strategy {
  height: 528px;
  overflow: hidden;
}
.strategy-stats {
  display: flex;
  align-items: center;
  height: 64px;
  margin: 16px 0;
}
.strategy-stats div {
  height: 64px;
  padding-right: 16px;
  margin-right: 16px;
  border-right: 1px solid #f0f0f0;
  color: #8c8c8c;
}
.strategy-stats div:nth-child(3) {
  margin: 0;
  border: 0;
}
.strategy-stats strong {
  display: block;
  margin-top: 8px;
  font-size: 24px;
  line-height: 32px;
  font-weight: 400;
  color: #262626;
}
.strategy-stats small {
  font-size: 16px;
}
.strategy-stats .ratio {
  display: flex;
  align-items: center;
  color: #bfbfbf;
}
.ratio b {
  font-weight: 400;
  color: #52c41a;
}
.ratio i {
  width: 1px;
  height: 24px;
  margin: 0 12px;
  background: #bfbfbf;
}
table {
  width: 100%;
  border-collapse: separate;
  border-spacing: 0;
  table-layout: fixed;
}
th,
td {
  padding: 0 0 0 16px;
  text-align: left;
  white-space: nowrap;
  border-bottom: 1px solid #f0f0f0;
}
th {
  font-weight: 500;
  background: #fafafa;
}
.framed {
  outline: 1px solid #d9d9d9;
  outline-offset: -1px;
}
.framed tbody tr:last-child td {
  border-bottom: 0;
}
.strategy th,
.strategy td {
  height: 48px;
}
.strategy .name {
  width: 107px;
}
.strategy .count {
  width: 106px;
}
.strategy td a {
  display: block;
  overflow: hidden;
  text-decoration: underline;
}

/* data tables */
.points time {
  font-size: 16px;
  line-height: 24px;
  color: #8c8c8c;
}
.points time b {
  font-weight: 500;
  color: #262626;
}
.points .card-head {
  height: 40px;
}
.points th,
.points td {
  height: 40px;
}
.controls {
  margin: 0;
}
.controls h3 {
  height: 40px;
}
.controls th,
.controls td {
  height: 56px;
}
.controls .state {
  width: 120px;
  font-weight: 400;
}
.controls .left {
  width: 180px;
}
.controls .act {
  width: 100px;
}
.tag {
  display: inline-block;
  padding: 0 7px;
  font-size: 12px;
  line-height: 20px;
  border: 1px solid;
  border-radius: 2px;
}
.red {
  color: #f5222d;
  background: #fff1f0;
  border-color: #ffa39e;
}
.green {
  color: #52c41a;
  background: #f6ffed;
  border-color: #b7eb8f;
}
.tag.blue {
  color: #004a8c;
  background: #e6f7ff;
  border-color: #91d5ff;
}
</style>
